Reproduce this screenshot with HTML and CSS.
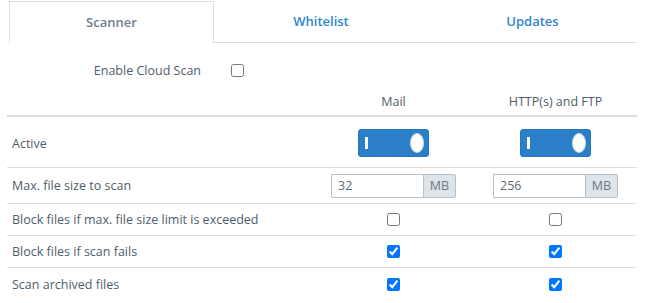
FILE: index.html
```html
<!DOCTYPE html>
<html>
<head>
<meta charset="utf-8">
<link rel="stylesheet" href="styles.css">
</head>
<body>
<div class="page">
  <nav class="tabs">
    <div class="tab tab-active tab-1">Scanner</div>
    <div class="tab tab-2">Whitelist</div>
    <div class="tab tab-3">Updates</div>
  </nav>

  <div class="cloud">
    <label class="cloud-label" for="cloud">Enable Cloud Scan</label>
    <input class="cb" type="checkbox" id="cloud">
  </div>

  <div class="grid">
    <div class="row row-head">
      <div class="cell"></div>
      <div class="cell center">Mail</div>
      <div class="cell center">HTTP(s) and FTP</div>
    </div>
    <div class="row row-active">
      <div class="cell">Active</div>
      <div class="cell center"><span class="toggle"><span class="bar"></span><span class="knob"></span></span></div>
      <div class="cell center"><span class="toggle"><span class="bar"></span><span class="knob"></span></span></div>
    </div>
    <div class="row row-size">
      <div class="cell">Max. file size to scan</div>
      <div class="cell center"><span class="igroup"><input class="inp" type="text" value="32"><span class="addon">MB</span></span></div>
      <div class="cell center"><span class="igroup"><input class="inp" type="text" value="256"><span class="addon">MB</span></span></div>
    </div>
    <div class="row">
      <div class="cell">Block files if max. file size limit is exceeded</div>
      <div class="cell center"><input class="cb" type="checkbox"></div>
      <div class="cell center"><input class="cb" type="checkbox"></div>
    </div>
    <div class="row">
      <div class="cell">Block files if scan fails</div>
      <div class="cell center"><input class="cb" type="checkbox" checked></div>
      <div class="cell center"><input class="cb" type="checkbox" checked></div>
    </div>
    <div class="row">
      <div class="cell">Scan archived files</div>
      <div class="cell center"><input class="cb" type="checkbox" checked></div>
      <div class="cell center"><input class="cb" type="checkbox" checked></div>
    </div>
  </div>
</div>
</body>
</html>
```
FILE: styles.css
```css
* { box-sizing: border-box; }
html, body { margin: 0; padding: 0; background: #fff; }
body {
  font-family: "Open Sans", "Noto Sans", sans-serif;
  font-size: 12.5px;
  color: #4e5d6b;
}
.page { width: 645px; height: 303px; overflow: hidden; }

.tabs {
  display: flex;
  margin: 1px 0 0 9px;
  height: 42px;
}
.tab {
  display: flex;
  align-items: center;
  justify-content: center;
  font-size: 13px;
  font-weight: 600;
  color: #2f86cf;
  border-bottom: 1px solid #dedede;
  padding-bottom: 2px;
}
.tab-1 { width: 205px; }
.tab-2 { width: 214px; }
.tab-3 { width: 209px; }
.tab-active {
  color: #6e7f8e;
  border: 1px solid #dedede;
  border-bottom: none;
  padding-bottom: 1px;
}

.cloud {
  display: flex;
  align-items: center;
  margin-top: 19px;
  height: 16px;
}
.cloud-label {
  width: 201px;
  text-align: right;
  color: #4e5d6b;
}
.cloud .cb { margin: 0 0 0 30px; }

.cb {
  width: 13px;
  height: 13px;
  margin: 0;
  display: block;
}

.grid {
  margin: 16px 0 0 7px;
  width: 630px;
}
.row {
  display: grid;
  grid-template-columns: 306px 161px 163px;
  align-items: center;
  border-bottom: 1px solid #dedede;
  height: 32px;
}
.row:last-child { border-bottom: none; }
.cell { padding-left: 5px; }
.cell.center { padding-left: 0; display: flex; justify-content: center; }
.row-head { height: 23px; border-bottom: 2px solid #dedede; align-items: start; }
.row-head .cell { line-height: 16px; }
.row-active { height: 51px; }
.row-active .cell { padding-top: 2px; }
.row-size { height: 36px; }

.toggle {
  position: relative;
  display: block;
  width: 71px;
  height: 28px;
  background: #2a7fc8;
  border: 1px solid #2676bb;
  border-radius: 3px;
}
.toggle .bar {
  position: absolute;
  left: 6px;
  top: 7px;
  width: 3px;
  height: 12px;
  background: #fff;
}
.toggle .knob {
  position: absolute;
  right: 4px;
  top: 3px;
  width: 14px;
  height: 20px;
  background: #fff;
  border: 1px solid #d3d8dc;
  border-radius: 7px / 10px;
}

.igroup { display: flex; width: 125px; height: 24px; }
.inp {
  width: 92px;
  height: 24px;
  margin: 0;
  padding: 0 6px;
  border: 1px solid #b7c1ca;
  border-right: none;
  border-radius: 2px 0 0 2px;
  font-family: "Open Sans", "Noto Sans", sans-serif;
  font-size: 12.5px;
  color: #5b6a77;
  outline: none;
}
.addon {
  width: 33px;
  height: 24px;
  display: flex;
  align-items: center;
  justify-content: center;
  background: #dfe4e8;
  border: 1px solid #b7c1ca;
  border-radius: 0 2px 2px 0;
  color: #6b7885;
  font-size: 12.5px;
}
```
